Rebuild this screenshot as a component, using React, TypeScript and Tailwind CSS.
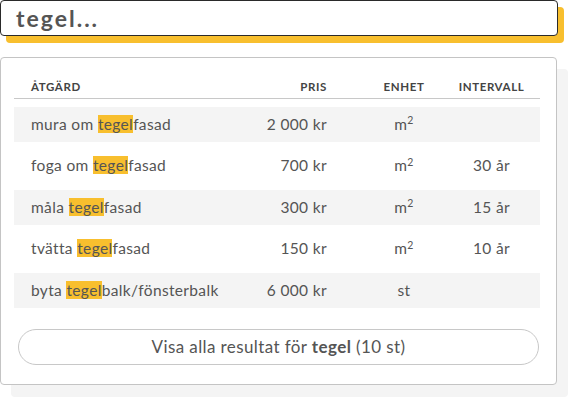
import React from "react";

const rows = [
  { pre: "mura om ", post: "fasad", price: "2 000 kr", unit: "m²", interval: "" },
  { pre: "foga om ", post: "fasad", price: "700 kr", unit: "m²", interval: "30 år" },
  { pre: "måla ", post: "fasad", price: "300 kr", unit: "m²", interval: "15 år" },
  { pre: "tvätta ", post: "fasad", price: "150 kr", unit: "m²", interval: "10 år" },
  { pre: "byta ", post: "balk/fönsterbalk", price: "6 000 kr", unit: "st", interval: "" },
];

function Unit({ u }: { u: string }) {
  if (u === "m²") {
    return (
      <span>
        m<sup className="text-[10.5px] relative top-[-0.55em] align-baseline">2</sup>
      </span>
    );
  }
  return <span>{u}</span>;
}

export default function App() {
  return (
    <div
      className="w-[569px] h-[398px] bg-white overflow-hidden text-[#555]"
      style={{ fontFamily: "Lato, 'Open Sans', sans-serif" }}
    >
      <div className="w-[558px] h-[36px] border border-[#2a2a2a] rounded-[4px] bg-white shadow-[6px_7px_0_#f8bf2e] flex items-center pl-[15px]">
        <span className="text-[23px] font-bold text-[#555] tracking-[2px]">tegel...</span>
      </div>

      <div className="mt-[21px] w-[557px] h-[328px] border border-[#c4c4c4] rounded-[4px] bg-white shadow-[11px_12px_0_#f4f4f4] pl-[13px] pr-[16px] pt-[17px]">
        <div className="flex items-center h-[24px] border-b border-[#c8c8c8] text-[11.5px] font-bold text-[#444] tracking-[0.6px]">
          <div className="flex-1 pl-[17px]">ÅTGÄRD</div>
          <div className="w-[93px] text-right">PRIS</div>
          <div className="w-[130px] pl-[24px] text-center">ENHET</div>
          <div className="w-[83px] pr-[14px] text-center">INTERVALL</div>
        </div>

        <div className="mt-[8px] flex flex-col gap-[6.5px]">
          {rows.map((r, i) => (
            <div
              key={i}
              className={`flex items-center h-[35px] text-[15.5px] tracking-[0.35px] ${i % 2 === 0 ? "bg-[#f4f4f4]" : "bg-white"}`}
            >
              <div className="flex-1 pl-[17px] whitespace-nowrap">
                {r.pre}
                <span className="bg-[#f8bf2e] text-[#555]">tegel</span>
                {r.post}
              </div>
              <div className="w-[93px] text-right whitespace-nowrap">{r.price}</div>
              <div className="w-[130px] pl-[24px] text-center">
                <Unit u={r.unit} />
              </div>
              <div className="w-[83px] pr-[14px] text-center">{r.interval}</div>
            </div>
          ))}
        </div>

        <div className="mt-[21px] ml-[4px] mr-[1px] h-[36px] border border-[#c8c8c8] rounded-full flex items-center justify-center text-[17px] tracking-[0.4px] text-[#555]">
          <span>
            Visa alla resultat för <span className="font-bold">tegel</span> (10 st)
          </span>
        </div>
      </div>
    </div>
  );
}
